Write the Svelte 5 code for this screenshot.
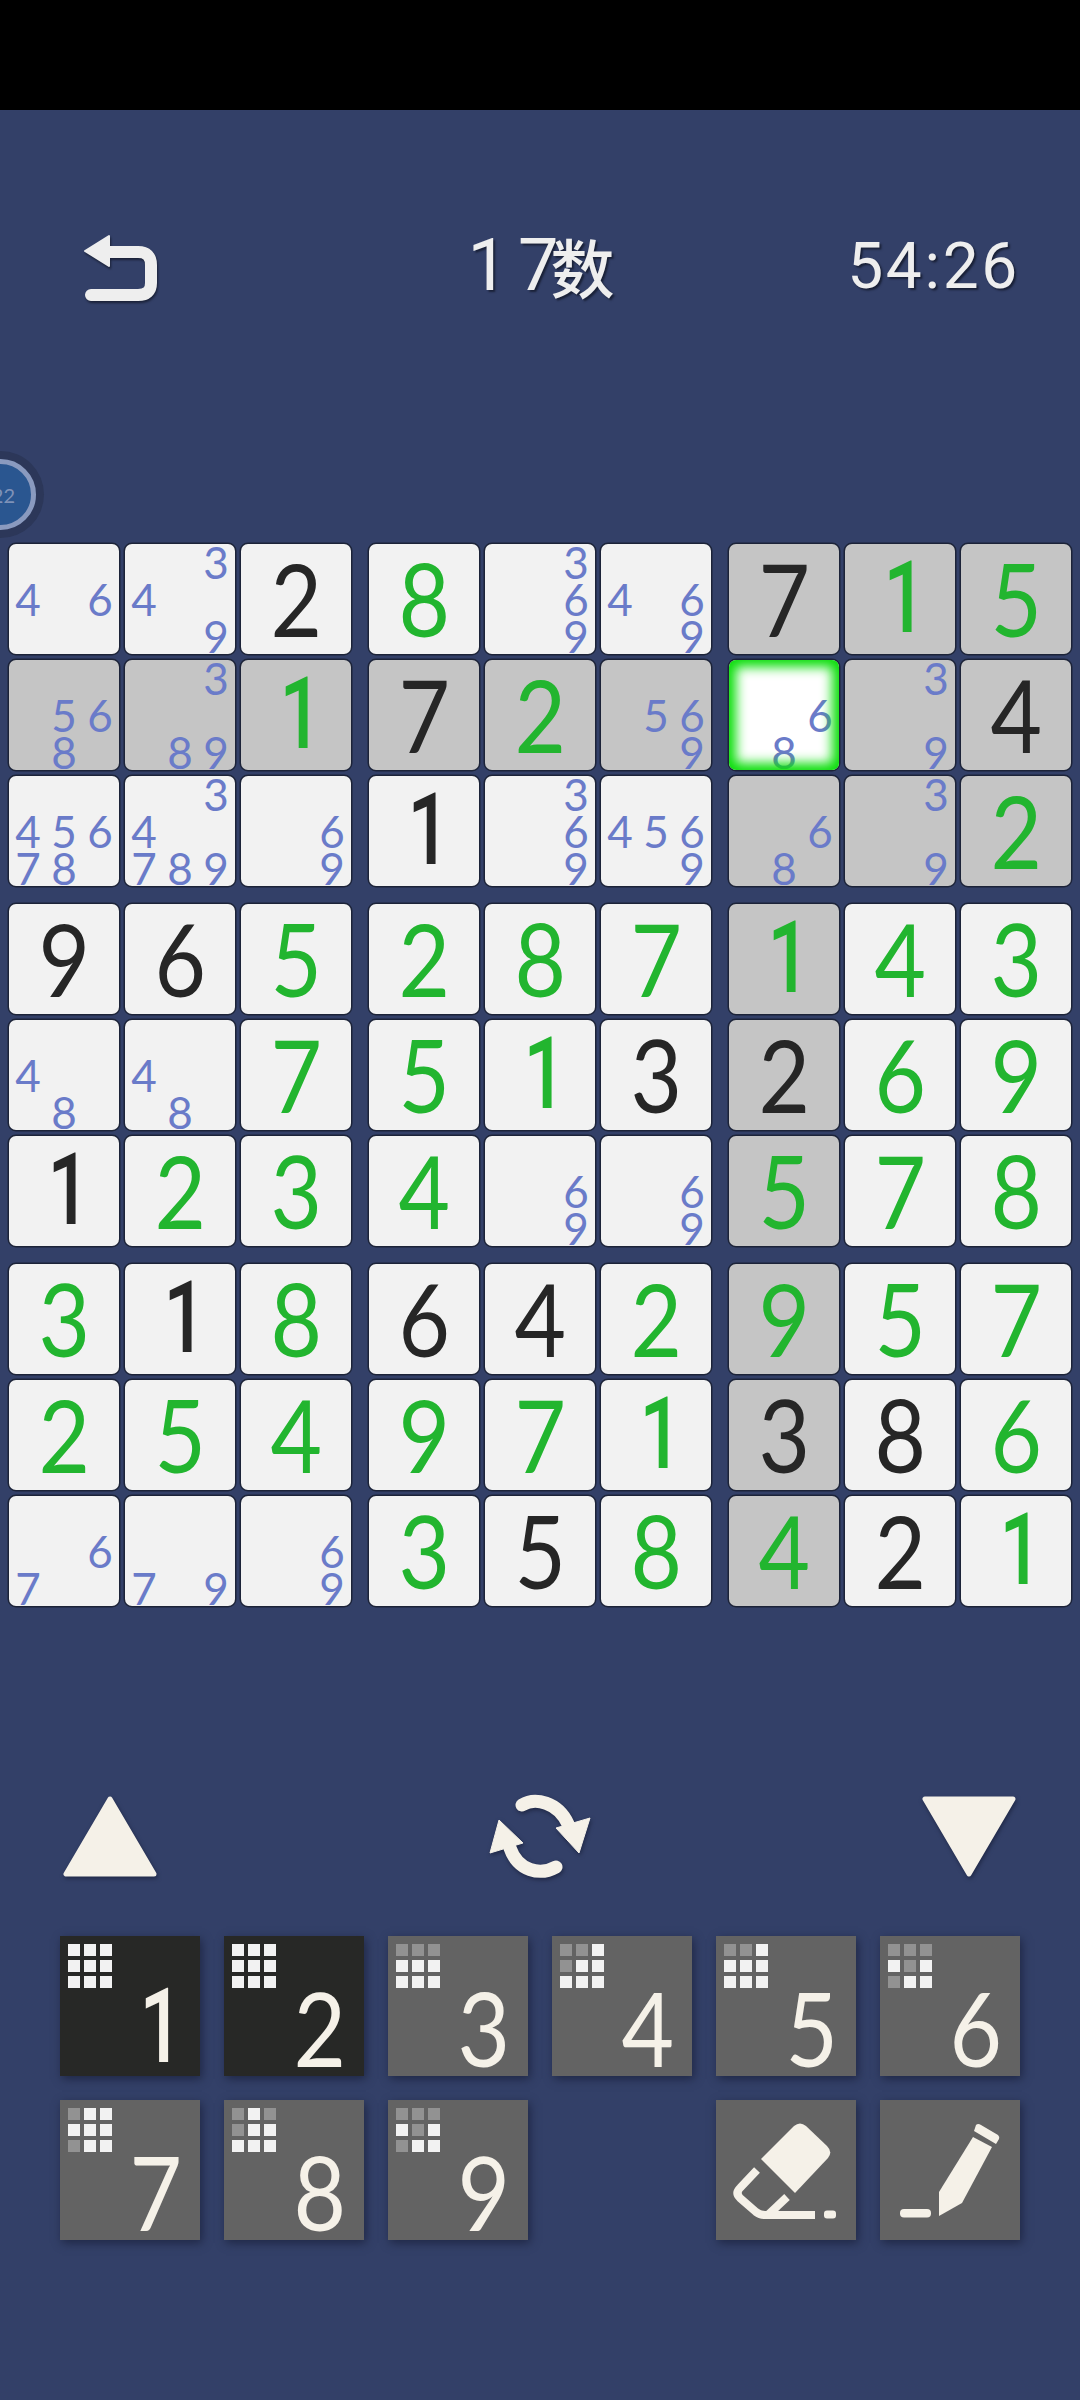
<script>
	// g = given/solved in green, b = black, arrays are pencil marks
	const g = (n) => ({ n, c: 'green' });
	const b = (n) => ({ n, c: 'black' });

	const rows = [
		[[4, 6], [3, 4, 9], b(2), g(8), [3, 6, 9], [4, 6, 9], b(7), g(1), g(5)],
		[[5, 6, 8], [3, 8, 9], g(1), b(7), g(2), [5, 6, 9], [6, 8], [3, 9], b(4)],
		[[4, 5, 6, 7, 8], [3, 4, 7, 8, 9], [6, 9], b(1), [3, 6, 9], [4, 5, 6, 9], [6, 8], [3, 9], g(2)],
		[b(9), b(6), g(5), g(2), g(8), g(7), g(1), g(4), g(3)],
		[[4, 8], [4, 8], g(7), g(5), g(1), b(3), b(2), g(6), g(9)],
		[b(1), g(2), g(3), g(4), [6, 9], [6, 9], g(5), g(7), g(8)],
		[g(3), b(1), g(8), b(6), b(4), g(2), g(9), g(5), g(7)],
		[g(2), g(5), g(4), g(9), g(7), g(1), b(3), b(8), g(6)],
		[[6, 7], [7, 9], [6, 9], g(3), b(5), g(8), g(4), b(2), g(1)]
	];

	const selR = 1;
	const selC = 6;

	function isGrey(r, c) {
		if (r === selR && c === selC) return false;
		if (r === selR || c === selC) return true;
		return Math.floor(r / 3) === Math.floor(selR / 3) && Math.floor(c / 3) === Math.floor(selC / 3);
	}

	// board split in 3x3 boxes
	let boxes = [];
	for (let br = 0; br < 3; br++) {
		for (let bc = 0; bc < 3; bc++) {
			let cells = [];
			for (let r = br * 3; r < br * 3 + 3; r++) {
				for (let c = bc * 3; c < bc * 3 + 3; c++) {
					cells.push({ v: rows[r][c], grey: isGrey(r, c), sel: r === selR && c === selC });
				}
			}
			boxes.push(cells);
		}
	}

	const nine = [1, 2, 3, 4, 5, 6, 7, 8, 9];
	const dims = {
		1: [], 2: [], 3: [0, 1, 2], 4: [0, 1, 3], 5: [0, 1],
		6: [0, 1, 2, 4, 6], 7: [0, 6], 8: [0, 2, 3], 9: [0, 1, 2, 4, 6]
	};
</script>

<div class="page">
	<div class="statusbar"></div>

	<header class="top">
		<svg class="back" width="76" height="70" viewBox="0 0 76 70">
			<path class="back-line" d="M22 17 H54 Q67 17 67 30 V48 Q67 60 54 60 H7" />
			<path class="back-head" d="M1 16 L25 1 V31 Z" />
		</svg>
		<div class="title"><span>1</span><span class="seven">7</span><span class="kanji">数</span></div>
		<div class="time">54:26</div>
	</header>

	<div class="badge"><span>22</span></div>

	<div class="board">
		{#each boxes as cells}
			<div class="box">
				{#each cells as cell}
					<div class="cell" class:grey={cell.grey} class:sel={cell.sel}>
						{#if Array.isArray(cell.v)}
							<div class="marks">
								{#each nine as n}
									<span>{cell.v.includes(n) ? n : ''}</span>
								{/each}
							</div>
						{:else}
							<span class="val digit {cell.v.c}" class:one={cell.v.n === 1}>{cell.v.n}</span>
						{/if}
					</div>
				{/each}
			</div>
		{/each}
	</div>

	<div class="controls">
		<svg class="tri" width="94" height="82" viewBox="0 0 94 82">
			<path d="M47 3 L3 78 H91 Z" />
		</svg>
		<svg class="tri refresh" width="120" height="100" viewBox="0 0 120 100">
			<path class="arc" d="M42 19 C55 11 78 16 88 38" />
			<path class="head" d="M76 42 L110 32 L99 67 Z" />
			<path class="arc" d="M76 81 C60 90 38 85 30 62" />
			<path class="head" d="M19 34 L43 57 L10 67 Z" />
		</svg>
		<svg class="tri" width="94" height="82" viewBox="0 0 94 82">
			<path d="M3 3 H91 L47 78 Z" />
		</svg>
	</div>

	<div class="pad">
		{#each nine as n}
			<div class="key" class:dark={n < 3}>
				<div class="mini">
					{#each Array(9) as _, i}
						<i class:dim={dims[n].includes(i)}></i>
					{/each}
				</div>
				<span class="key-num digit" class:one={n === 1}>{n}</span>
			</div>
			{#if n === 9}
				<div class="spacer"></div>
			{/if}
		{/each}
		<div class="key">
			<svg width="140" height="140" viewBox="0 0 140 140">
				<path class="fill" d="M45 59 L78 26 Q84 21 90 26 L111 46 Q117 52 112 58 L79 93 Z" />
				<path class="line" d="M41 70 L24 88 Q19 93 24 98 L40 112 Q44 115 49 115 H99" />
				<path class="line" d="M71 97 L53 114" />
				<rect class="fill" x="108" y="110.5" width="12" height="8" rx="3" />
			</svg>
		</div>
		<div class="key">
			<svg width="140" height="140" viewBox="0 0 140 140">
				<path class="fill" d="M96 25 Q98 23 101 25 L118 35 Q120 37 119 39 L116 44 L94 31 Z" />
				<path class="fill" d="M93 37 L112 47 L82 103 L59 116 V92 Z" />
				<rect class="fill" x="20" y="109" width="31" height="8.5" rx="4" />
			</svg>
		</div>
	</div>
</div>

<style>
	:global(body) {
		margin: 0;
		background: #334068;
	}

	.page {
		position: relative;
		width: 1080px;
		height: 2400px;
		overflow: hidden;
		background: #334068;
		font-family: "Lato", sans-serif;
	}

	.statusbar {
		height: 110px;
		background: #000;
	}

	.top {
		display: flex;
		justify-content: space-between;
		align-items: flex-start;
		height: 70px;
		margin-top: 125px;
		padding: 0 60px 0 84px;
		color: #eeeeee;
		font-family: "Roboto", sans-serif;
		font-weight: 400;
		text-shadow: 2px 2px 2px #1a2138;
	}

	.back {
		filter: drop-shadow(1px 2px 1px #1a2138);
		overflow: visible;
	}

	.back-line {
		fill: none;
		stroke: #eeeeee;
		stroke-width: 12;
		stroke-linecap: round;
	}

	.back-head {
		fill: #eeeeee;
		stroke: #eeeeee;
		stroke-width: 2;
		stroke-linejoin: round;
	}

	.title {
		display: flex;
		align-items: center;
		width: 150px;
		height: 60px;
		margin-left: 78px;
		font-size: 72px;
	}

	.seven {
		margin-left: 10px;
		margin-right: -8px;
	}

	.kanji {
		font-family: "Noto Sans CJK SC", sans-serif;
		font-weight: 500;
		font-size: 64px;
	}

	.time {
		margin-top: 8px;
		font-size: 64px;
		line-height: 48px;
		letter-spacing: 2.7px;
	}

	.badge {
		position: absolute;
		left: -35px;
		top: 459px;
		display: flex;
		align-items: center;
		justify-content: flex-end;
		box-sizing: border-box;
		width: 71px;
		height: 71px;
		padding-right: 16px;
		border: 5px solid #8a9abf;
		border-radius: 50%;
		background: #2a5690;
		box-shadow: 0 0 0 8px #2c3759;
		color: #7f92b8;
		font-size: 20px;
	}

	.board {
		display: grid;
		grid-template-columns: repeat(3, 342px);
		gap: 18px;
		margin: 239px 0 0 9px;
	}

	.box {
		display: grid;
		grid-template-columns: repeat(3, 110px);
		grid-auto-rows: 110px;
		gap: 6px;
	}

	.cell {
		position: relative;
		display: flex;
		align-items: center;
		justify-content: center;
		border-radius: 7px;
		background: #f2f2f2;
		box-shadow: 0 0 0 1.5px #1c2338;
	}

	.cell.grey {
		background: #c5c5c5;
	}

	.cell.sel {
		background: #fff;
	}

	/* glow sits over the pencil marks */
	.cell.sel::after {
		content: "";
		position: absolute;
		inset: 0;
		border-radius: 7px;
		box-shadow: inset 0 0 12px 7px #0ade0a;
	}

	.digit {
		display: inline-block;
		transform: scaleX(0.88);
	}

	.digit.one {
		font-family: "Roboto", sans-serif;
		font-weight: 500;
		transform: translateX(5px) scaleX(0.74);
	}

	.val {
		margin-top: -3px;
		font-size: 101px;
		line-height: 110px;
	}

	.val.green {
		color: #22b52f;
	}

	.val.black {
		color: #262626;
	}

	.marks {
		display: grid;
		grid-template-columns: repeat(3, 36px);
		grid-template-rows: repeat(3, 37px);
		color: #6a7bc9;
		font-size: 44px;
		line-height: 37px;
		text-align: center;
	}

	.controls {
		display: flex;
		justify-content: space-between;
		align-items: flex-start;
		height: 100px;
		margin-top: 190px;
		padding: 0 64px 0 63px;
	}

	.tri {
		filter: drop-shadow(1px 2px 2px #1f2745);
	}

	.refresh {
		margin-top: -10px;
	}

	.tri path {
		fill: #f5f1e8;
		stroke: #f5f1e8;
		stroke-width: 5;
		stroke-linejoin: round;
	}

	.tri path.head {
		stroke-width: 1;
	}

	.tri path.arc {
		fill: none;
		stroke-width: 13;
		stroke-linecap: round;
	}

	.pad {
		display: grid;
		grid-template-columns: repeat(6, 140px);
		grid-auto-rows: 140px;
		gap: 24px;
		margin: 40px 0 0 60px;
	}

	.spacer {
		width: 140px;
	}

	.key {
		display: flex;
		flex-direction: column;
		background: #636363;
		box-shadow: 2px 3px 9px #1f2745;
	}

	.key.dark {
		background: #272826;
	}

	.mini {
		display: grid;
		grid-template-columns: repeat(3, 12px);
		grid-auto-rows: 12px;
		gap: 4px;
		margin: 8px 0 0 8px;
	}

	.mini i {
		background: #f2f2f2;
	}

	.mini i.dim {
		background: #929292;
	}

	.key-num {
		align-self: flex-end;
		margin: -11px 14px 0 0;
		color: #f5f1e8;
		font-size: 103px;
		line-height: 100px;
	}

	.fill {
		fill: #f5f1e8;
	}

	.line {
		fill: none;
		stroke: #f5f1e8;
		stroke-width: 8;
	}
</style>
